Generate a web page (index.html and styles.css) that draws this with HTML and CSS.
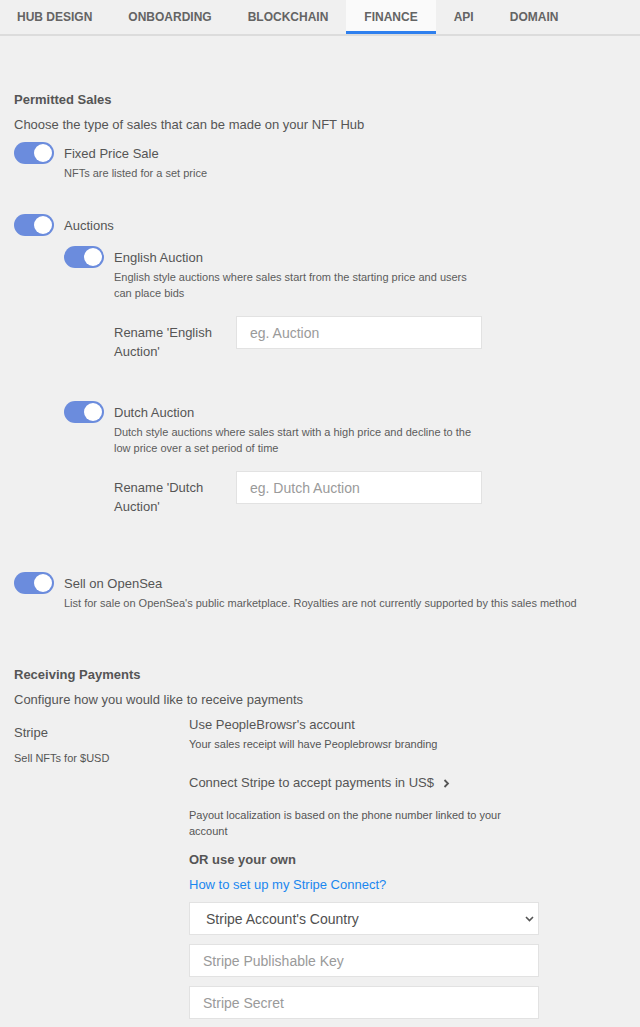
FILE: index.html
```html
<!DOCTYPE html>
<html lang="en">
<head>
<meta charset="utf-8">
<title>Finance</title>
<link rel="stylesheet" href="styles.css">
</head>
<body>
<nav class="tabs">
  <a class="tab tab-first">HUB DESIGN</a>
  <a class="tab">ONBOARDING</a>
  <a class="tab">BLOCKCHAIN</a>
  <a class="tab tab-active">FINANCE</a>
  <a class="tab">API</a>
  <a class="tab">DOMAIN</a>
</nav>
<main class="content">
  <section class="sales">
    <h2 class="heading">Permitted Sales</h2>
    <p class="intro">Choose the type of sales that can be made on your NFT Hub</p>

    <div class="option opt-fixed">
      <div class="opt-row"><span class="toggle"><span class="knob"></span></span><span class="opt-title">Fixed Price Sale</span></div>
      <p class="opt-desc">NFTs are listed for a set price</p>
    </div>

    <div class="option opt-auctions">
      <div class="opt-row"><span class="toggle"><span class="knob"></span></span><span class="opt-title">Auctions</span></div>
      <div class="sub-options">
        <div class="option sub sub-english">
          <div class="opt-row"><span class="toggle"><span class="knob"></span></span><span class="opt-title">English Auction</span></div>
          <p class="opt-desc sub-desc">English style auctions where sales start from the starting price and users can place bids</p>
          <div class="rename">
            <label class="rename-label">Rename 'English Auction'</label>
            <input class="field rename-input" type="text" placeholder="eg. Auction">
          </div>
        </div>
        <div class="option sub sub-dutch">
          <div class="opt-row"><span class="toggle"><span class="knob"></span></span><span class="opt-title">Dutch Auction</span></div>
          <p class="opt-desc sub-desc">Dutch style auctions where sales start with a high price and decline to the low price over a set period of time</p>
          <div class="rename">
            <label class="rename-label">Rename 'Dutch Auction'</label>
            <input class="field rename-input" type="text" placeholder="eg. Dutch Auction">
          </div>
        </div>
      </div>
    </div>

    <div class="option opt-opensea">
      <div class="opt-row"><span class="toggle"><span class="knob"></span></span><span class="opt-title">Sell on OpenSea</span></div>
      <p class="opt-desc">List for sale on OpenSea's public marketplace. Royalties are not currently supported by this sales method</p>
    </div>
  </section>

  <section class="payments">
    <h2 class="heading">Receiving Payments</h2>
    <p class="intro">Configure how you would like to receive payments</p>
    <div class="stripe">
      <div class="stripe-left">
        <div class="stripe-name">Stripe</div>
        <div class="stripe-sub">Sell NFTs for $USD</div>
      </div>
      <div class="stripe-right">
        <div class="pb-title">Use PeopleBrowsr's account</div>
        <div class="pb-sub">Your sales receipt will have Peoplebrowsr branding</div>
        <div class="connect">Connect Stripe to accept payments in US$
          <svg class="connect-chev" width="7" height="9" viewBox="0 0 7 9"><polyline points="1.5,1 5,4.5 1.5,8" fill="none" stroke="#555" stroke-width="1.8"/></svg>
        </div>
        <div class="payout">Payout localization is based on the phone number linked to your account</div>
        <div class="own">OR use your own</div>
        <a class="howto">How to set up my Stripe Connect?</a>
        <div class="select-wrap">
          <select class="field select">
            <option>Stripe Account's Country</option>
          </select>
          <svg class="select-chev" width="9" height="6" viewBox="0 0 9 6"><polyline points="1,1 4.5,4.5 8,1" fill="none" stroke="#555" stroke-width="1.6"/></svg>
        </div>
        <input class="field stripe-input" type="text" placeholder="Stripe Publishable Key">
        <input class="field stripe-input" type="text" placeholder="Stripe Secret">
      </div>
    </div>
  </section>
</main>
</body>
</html>
```

FILE: styles.css
```css
* { box-sizing: border-box; }
html, body { margin: 0; padding: 0; }
body {
  background: #f0f0f0;
  font-family: "Liberation Sans", Arial, sans-serif;
  color: #555;
  width: 640px;
}
p { margin: 0; }
h2 { margin: 0; }

.tabs {
  display: flex;
  border-bottom: 2px solid #dcdcdc;
  height: 36px;
}
.tab {
  display: block;
  padding: 0 18px;
  height: 34px;
  line-height: 34px;
  font-size: 12px;
  font-weight: bold;
  color: #646464;
}
.tab-first { margin-left: -1px; }
.tab-active {
  background: #fafafa;
  box-shadow: inset 0 -3px 0 #2f80ee;
}

.content { padding: 56px 14px 0 14px; }

.heading {
  font-size: 13px;
  font-weight: bold;
  line-height: 16px;
  color: #555;
}
.intro {
  font-size: 13px;
  line-height: 20px;
  margin-top: 7px;
}
.payments .intro { margin-top: 7px; }

.opt-row {
  display: flex;
  align-items: flex-start;
  gap: 10px;
}
.toggle {
  display: block;
  flex: none;
  position: relative;
  width: 40px;
  height: 22px;
  border-radius: 11px;
  background: #6b8cdd;
}
.knob {
  position: absolute;
  top: 2px;
  right: 2px;
  width: 18px;
  height: 18px;
  border-radius: 50%;
  background: #fff;
}
.opt-title {
  font-size: 13px;
  line-height: 23px;
  color: #555;
}
.opt-desc {
  margin: 0 0 0 50px;
  font-size: 11px;
  line-height: 16px;
  color: #5c5c5c;
}
.sub-desc { width: 368px; }

.opt-fixed { margin-top: 7px; }
.opt-auctions { margin-top: 33px; }
.sub-options { margin-left: 50px; }
.sub-english { margin-top: 9px; }
.sub-dutch { margin-top: 40px; }
.opt-opensea { margin-top: 56px; }

.rename {
  display: flex;
  align-items: flex-start;
  gap: 12px;
  margin: 15px 0 0 50px;
}
.rename-label {
  width: 110px;
  padding-top: 7px;
  font-size: 13px;
  line-height: 19px;
  color: #555;
}
.field {
  display: block;
  height: 33px;
  background: #fff;
  border: 1px solid #e2e2e2;
  border-radius: 0;
  outline: none;
  font-family: "Liberation Sans", Arial, sans-serif;
  font-size: 14px;
  color: #555;
  padding: 0 13px;
  margin: 0;
}
.field::placeholder { color: #9a9a9a; }
.rename-input { width: 246px; }

.payments { margin-top: 56px; }
.stripe {
  display: grid;
  grid-template-columns: 175px 350px;
  margin-top: 5px;
}
.stripe-name {
  margin-top: 8px;
  font-size: 13px;
  line-height: 20px;
}
.stripe-sub {
  margin-top: 7px;
  font-size: 11px;
  line-height: 16px;
}
.pb-title {
  font-size: 13px;
  line-height: 20px;
}
.pb-sub {
  margin-top: 1px;
  font-size: 11px;
  line-height: 16px;
}
.connect {
  margin-top: 21px;
  font-size: 13px;
  line-height: 20px;
  display: flex;
  align-items: center;
  gap: 9px;
}
.connect-chev { display: block; }
.payout {
  margin-top: 14px;
  font-size: 11px;
  line-height: 16px;
}
.own {
  margin-top: 11px;
  font-size: 13px;
  font-weight: bold;
  line-height: 20px;
}
.howto {
  display: block;
  margin-top: 5px;
  font-size: 13px;
  line-height: 20px;
  color: #1a87ef;
}
.select-wrap {
  position: relative;
  margin-top: 7px;
  width: 350px;
}
.select {
  width: 350px;
  appearance: none;
  -webkit-appearance: none;
  padding-left: 16px;
  color: #505050;
}
.select-chev {
  position: absolute;
  right: 5px;
  top: 14px;
}
.stripe-input {
  width: 350px;
  margin-top: 9px;
}
```
